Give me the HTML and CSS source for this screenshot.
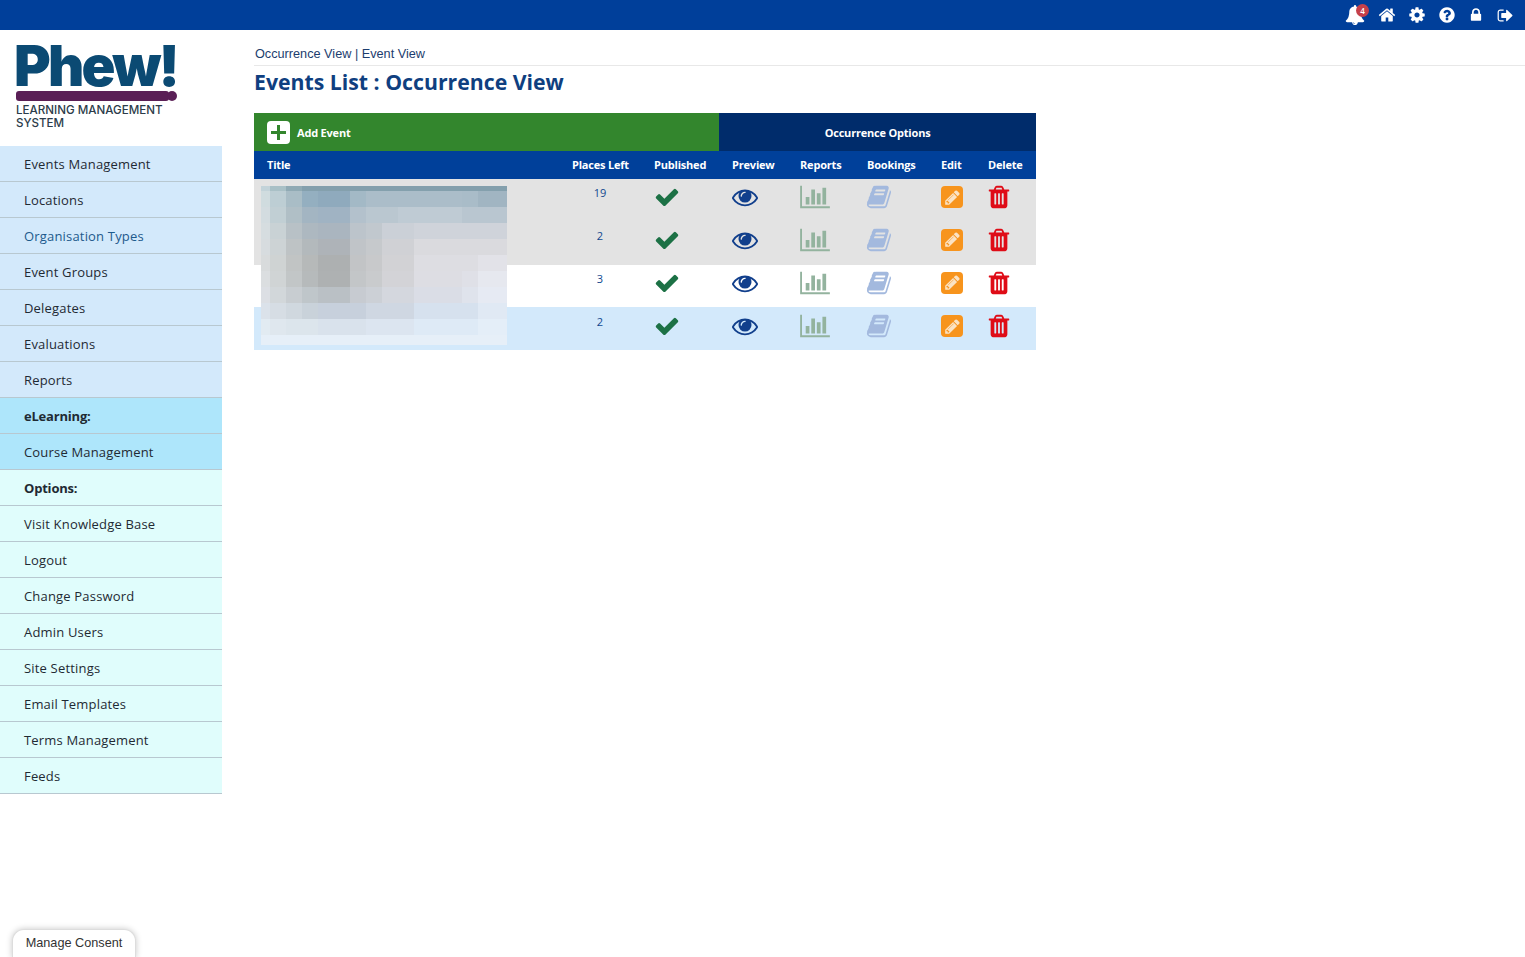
FILE: index.html
```html
<!DOCTYPE html>
<html lang="en">
<head>
<meta charset="utf-8">
<title>Events List : Occurrence View</title>
<link rel="stylesheet" href="styles.css">
</head>
<body>
<svg class="defs" width="0" height="0" aria-hidden="true">
  <symbol id="i-check" viewBox="0 0 1792 1792"><path d="M1671 566q0 40-28 68l-724 724-136 136q-28 28-68 28t-68-28l-136-136-362-362q-28-28-28-68t28-68l136-136q28-28 68-28t68 28l294 295 656-657q28-28 68-28t68 28l136 136q28 28 28 68z"/></symbol>
  <symbol id="i-eye" viewBox="0 0 1792 1792"><path d="M1664 960q-152-236-381-353 61 104 61 225 0 185-131.5 316.5t-316.5 131.5-316.5-131.5-131.5-316.5q0-121 61-225-229 117-381 353 133 205 333.5 326.5t434.5 121.5 434.5-121.5 333.5-326.5zm-720-384q0-20-14-34t-34-14q-125 0-214.5 89.5t-89.5 214.5q0 20 14 34t34 14 34-14 14-34q0-86 61-147t147-61q20 0 34-14t14-34zm848 384q0 34-20 69-140 230-376.5 368.5t-499.5 138.5-499.5-139-376.5-368q-20-35-20-69t20-69q140-229 376.5-368t499.5-139 499.5 139 376.5 368q20 35 20 69z"/></symbol>
  <symbol id="i-chart" viewBox="0 0 2048 1792"><path d="M640 896v512h-256v-512h256zm384-512v1024h-256v-1024h256zm1024 1152v128h-2048v-1536h128v1408h1920zm-640-896v768h-256v-768h256zm384-384v1152h-256v-1152h256z"/></symbol>
  <symbol id="i-book" viewBox="0 0 1792 1792"><path d="M1703 478q40 57 18 129l-275 906q-19 64-76.5 107.5t-122.5 43.5h-923q-77 0-148.5-53.5t-99.5-131.5q-24-67-2-127 0-4 3-27t4-37q1-8-3-21.5t-3-19.5q2-11 8-21t16.5-23.5 16.5-23.5q23-38 45-91.5t30-91.5q3-10 .5-30t-.5-28q3-11 17-28t17-23q21-36 42-92t25-90q1-9-2.5-32t.5-28q4-13 22-30.5t22-22.5q19-26 42.5-84.5t27.5-96.5q1-8-3-25.5t-2-26.5q2-8 9-18t18-23 17-21q8-12 16.5-30.5t15-35 16-36 19.5-32 26.5-23.5 36-11.5 47.5 5.5l-1 3q38-9 51-9h761q74 0 114 56t18 130l-274 906q-36 119-71.5 153.5t-128.5 34.5h-869q-27 0-38 15-11 16-1 43 24 70 144 70h923q29 0 56-15.5t35-41.5l300-987q7-22 5-57 38 15 59 43zm-1064 2q-4 13 2 22.5t20 9.5h608q13 0 25.5-9.5t16.5-22.5l21-64q4-13-2-22.5t-20-9.5h-608q-13 0-25.5 9.5t-16.5 22.5zm-83 256q-4 13 2 22.5t20 9.5h608q13 0 25.5-9.5t16.5-22.5l21-64q4-13-2-22.5t-20-9.5h-608q-13 0-25.5 9.5t-16.5 22.5z"/></symbol>
  <symbol id="i-pencil" viewBox="0 0 1792 1792"><path d="M491 1536l91-91-235-235-91 91v107h128v128h107zm523-928q0-22-22-22-10 0-17 7l-542 542q-7 7-7 17 0 22 22 22 10 0 17-7l542-542q7-7 7-17zm-54-192l416 416-832 832h-416v-416zm683 96q0 53-37 90l-166 166-416-416 166-165q36-38 90-38 53 0 91 38l235 234q37 39 37 91z"/></symbol>
  <symbol id="i-trash" viewBox="0 0 1792 1792"><path d="M704 1376v-704q0-14-9-23t-23-9h-64q-14 0-23 9t-9 23v704q0 14 9 23t23 9h64q14 0 23-9t9-23zm256 0v-704q0-14-9-23t-23-9h-64q-14 0-23 9t-9 23v704q0 14 9 23t23 9h64q14 0 23-9t9-23zm256 0v-704q0-14-9-23t-23-9h-64q-14 0-23 9t-9 23v704q0 14 9 23t23 9h64q14 0 23-9t9-23zm-544-992h448l-48-117q-7-9-17-11h-317q-10 2-17 11zm928 32v64q0 14-9 23t-23 9h-96v948q0 83-47 143.5t-113 60.5h-832q-66 0-113-58.5t-47-141.5v-952h-96q-14 0-23-9t-9-23v-64q0-14 9-23t23-9h309l70-167q15-37 54-63t79-26h320q40 0 79 26t54 63l70 167h309q14 0 23 9t9 23z"/></symbol>
  <symbol id="i-bell" viewBox="0 0 1792 1792"><path d="M912 1696q0-16-16-16-59 0-101.5-42.5t-42.5-101.5q0-16-16-16t-16 16q0 73 51.5 124.5t124.5 51.5q16 0 16-16zm816-288q0 52-38 90t-90 38h-448q0 106-75 181t-181 75-181-75-75-181h-448q-52 0-90-38t-38-90q50-42 91-88t85-119.5 74.5-158.5 50-206 19.5-260q0-152 117-282.5t307-158.5q-8-19-8-39 0-40 28-68t68-28 68 28 28 68q0 20-8 39 190 28 307 158.5t117 282.5q0 139 19.5 260t50 206 74.5 158.5 85 119.5 91 88z"/></symbol>
  <symbol id="i-home" viewBox="0 0 1792 1792"><path d="M1472 992v480q0 26-19 45t-45 19h-384v-384h-256v384h-384q-26 0-45-19t-19-45v-480q0-1 .5-3t.5-3l575-474 575 474q1 2 1 6zm223-69l-62 74q-8 9-21 11h-3q-13 0-21-7l-692-577-692 577q-12 8-24 7-13-2-21-11l-62-74q-8-10-7-23.5t11-21.5l719-599q32-26 76-26t76 26l244 204v-195q0-14 9-23t23-9h192q14 0 23 9t9 23v408l219 182q10 8 11 21.5t-7 23.5z"/></symbol>
  <symbol id="i-cog" viewBox="0 0 1792 1792"><path d="M1152 896q0-106-75-181t-181-75-181 75-75 181 75 181 181 75 181-75 75-181zm512-109v222q0 12-8 23t-20 13l-185 28q-19 54-39 91 35 50 107 138 10 12 10 25t-9 23q-27 37-99 108t-94 71q-12 0-26-9l-138-108q-44 23-91 38-16 136-29 186-7 28-36 28h-222q-14 0-24.5-8.5t-11.5-21.5l-28-184q-49-16-90-37l-141 107q-10 9-25 9-14 0-25-11-126-114-165-168-7-10-7-23 0-12 8-23 15-21 51-66.5t54-70.5q-27-50-41-99l-183-27q-13-2-21-12.5t-8-23.5v-222q0-12 8-23t19-13l186-28q14-46 39-92-40-57-107-138-10-12-10-24 0-10 9-23 26-36 98.5-107.5t94.5-71.5q13 0 26 10l138 107q44-23 91-38 16-136 29-186 7-28 36-28h222q14 0 24.5 8.5t11.5 21.5l28 184q49 16 90 37l142-107q9-9 24-9 13 0 25 10 129 119 165 170 7 8 7 22 0 12-8 23-15 21-51 66.5t-54 70.5q26 50 41 98l183 28q13 2 21 12.5t8 23.5z"/></symbol>
  <symbol id="i-help" viewBox="0 0 1792 1792"><path d="M1024 1376v-192q0-14-9-23t-23-9h-192q-14 0-23 9t-9 23v192q0 14 9 23t23 9h192q14 0 23-9t9-23zm256-672q0-88-55.5-163t-138.5-116-170-41q-243 0-371 213-15 24 8 42l132 100q7 6 19 6 16 0 25-12 53-68 86-92 34-24 86-24 48 0 85.5 26t37.5 59q0 38-20 61t-68 45q-63 28-115.5 86.5t-52.5 125.5v36q0 14 9 23t23 9h192q14 0 23-9t9-23q0-19 21.5-49.5t54.5-49.5q32-18 49-28.5t46-35 44.5-48 28-60.5 12.5-81zm384 192q0 209-103 385.5t-279.5 279.5-385.5 103-385.5-103-279.5-279.5-103-385.5 103-385.5 279.5-279.5 385.5-103 385.5 103 279.5 279.5 103 385.5z"/></symbol>
  <symbol id="i-lock" viewBox="0 0 1792 1792"><path d="M640 768h512v-192q0-106-75-181t-181-75-181 75-75 181v192zm832 96v576q0 40-28 68t-68 28h-960q-40 0-68-28t-28-68v-576q0-40 28-68t68-28h32v-192q0-184 132-316t316-132 316 132 132 316v192h32q40 0 68 28t28 68z"/></symbol>
  <symbol id="i-out" viewBox="0 0 1792 1792"><path d="M704 1440q0 4 1 20t.5 26.5-3 23.5-10 19.5-20.5 6.5h-320q-119 0-203.5-84.5t-84.5-203.5v-704q0-119 84.5-203.5t203.5-84.5h320q13 0 22.5 9.5t9.5 22.5q0 4 1 20t.5 26.5-3 23.5-10 19.5-20.5 6.5h-320q-66 0-113 47t-47 113v704q0 66 47 113t113 47h312l11.5 1 11.5 3 8 5.5 7 9 2 13.5zm928-544q0 26-19 45l-544 544q-19 19-45 19t-45-19-19-45v-288h-448q-26 0-45-19t-19-45v-384q0-26 19-45t45-19h448v-288q0-26 19-45t45-19 45 19l544 544q19 19 19 45z"/></symbol>
</svg>

<header class="topbar">
  <span class="top-icon bell-wrap"><svg class="top-svg bell"><use href="#i-bell"/></svg><span class="badge">4</span></span>
  <svg class="top-svg home"><use href="#i-home"/></svg>
  <svg class="top-svg cog"><use href="#i-cog"/></svg>
  <svg class="top-svg help"><use href="#i-help"/></svg>
  <svg class="top-svg lock"><use href="#i-lock"/></svg>
  <svg class="top-svg out"><use href="#i-out"/></svg>
</header>

<div class="page">
  <aside class="sidebar">
    <div class="logo">
      <div class="logo-word">Phew!</div>
      <div class="logo-bar"><span class="bar-long"></span><span class="bar-dot"></span></div>
      <div class="logo-sub">LEARNING MANAGEMENT SYSTEM</div>
    </div>
    <nav class="menu">
      <a class="item blue">Events Management</a>
      <a class="item blue">Locations</a>
      <a class="item blue current">Organisation Types</a>
      <a class="item blue">Event Groups</a>
      <a class="item blue">Delegates</a>
      <a class="item blue">Evaluations</a>
      <a class="item blue">Reports</a>
      <a class="item sky head">eLearning:</a>
      <a class="item sky">Course Management</a>
      <a class="item mint head">Options:</a>
      <a class="item mint">Visit Knowledge Base</a>
      <a class="item mint">Logout</a>
      <a class="item mint">Change Password</a>
      <a class="item mint">Admin Users</a>
      <a class="item mint">Site Settings</a>
      <a class="item mint">Email Templates</a>
      <a class="item mint">Terms Management</a>
      <a class="item mint">Feeds</a>
    </nav>
  </aside>

  <main class="content">
    <div class="crumbs">Occurrence View | Event View</div>
    <h1 class="title">Events List : Occurrence View</h1>
    <div class="table-wrap">
      <table class="events">
        <colgroup>
          <col class="c-title"><col class="c-places"><col class="c-pub"><col class="c-prev"><col class="c-rep"><col class="c-book"><col class="c-edit"><col class="c-del">
        </colgroup>
        <thead>
          <tr class="band">
            <th colspan="3" class="add"><span class="add-inner"><span class="plus"></span>Add Event</span></th>
            <th colspan="5" class="opts">Occurrence Options</th>
          </tr>
          <tr class="cols">
            <th>Title</th><th>Places Left</th><th>Published</th><th>Preview</th><th>Reports</th><th>Bookings</th><th>Edit</th><th>Delete</th>
          </tr>
        </thead>
        <tbody>
          <tr class="grey">
            <td></td><td class="num">19</td>
            <td><svg class="ic check"><use href="#i-check"/></svg></td>
            <td><svg class="ic eye"><use href="#i-eye"/></svg></td>
            <td><svg class="ic chart"><use href="#i-chart"/></svg></td>
            <td><svg class="ic book"><use href="#i-book"/></svg></td>
            <td><span class="edit"><svg class="pen"><use href="#i-pencil"/></svg></span></td>
            <td><svg class="ic trash"><use href="#i-trash"/></svg></td>
          </tr>
          <tr class="grey">
            <td></td><td class="num">2</td>
            <td><svg class="ic check"><use href="#i-check"/></svg></td>
            <td><svg class="ic eye"><use href="#i-eye"/></svg></td>
            <td><svg class="ic chart"><use href="#i-chart"/></svg></td>
            <td><svg class="ic book"><use href="#i-book"/></svg></td>
            <td><span class="edit"><svg class="pen"><use href="#i-pencil"/></svg></span></td>
            <td><svg class="ic trash"><use href="#i-trash"/></svg></td>
          </tr>
          <tr class="plain">
            <td></td><td class="num">3</td>
            <td><svg class="ic check"><use href="#i-check"/></svg></td>
            <td><svg class="ic eye"><use href="#i-eye"/></svg></td>
            <td><svg class="ic chart"><use href="#i-chart"/></svg></td>
            <td><svg class="ic book"><use href="#i-book"/></svg></td>
            <td><span class="edit"><svg class="pen"><use href="#i-pencil"/></svg></span></td>
            <td><svg class="ic trash"><use href="#i-trash"/></svg></td>
          </tr>
          <tr class="pale">
            <td></td><td class="num">2</td>
            <td><svg class="ic check"><use href="#i-check"/></svg></td>
            <td><svg class="ic eye"><use href="#i-eye"/></svg></td>
            <td><svg class="ic chart"><use href="#i-chart"/></svg></td>
            <td><svg class="ic book"><use href="#i-book"/></svg></td>
            <td><span class="edit"><svg class="pen"><use href="#i-pencil"/></svg></span></td>
            <td><svg class="ic trash"><use href="#i-trash"/></svg></td>
          </tr>
        </tbody>
      </table>
      <svg class="mosaic" width="246" height="159" viewBox="0 0 246 159" shape-rendering="crispEdges" aria-hidden="true">
        <rect width="246" height="159" fill="#dfe4e8"/>
        <g fill="#c3d3d9"><rect x="0" y="0" width="9" height="5"/></g>
        <rect x="9" width="16" height="5" fill="#a9c0c6"/><rect x="25" width="16" height="5" fill="#90aab4"/><rect x="41" width="205" height="5" fill="#84a0ad"/>
        <rect y="5" width="9" height="16" fill="#d0dcdf"/><rect x="9" y="5" width="16" height="16" fill="#bdced4"/><rect x="25" y="5" width="16" height="16" fill="#a9bdc6"/><rect x="41" y="5" width="16" height="16" fill="#94afc0"/><rect x="57" y="5" width="32" height="16" fill="#8faabd"/><rect x="89" y="5" width="16" height="16" fill="#a3b9c6"/><rect x="105" y="5" width="96" height="16" fill="#abbdc9"/><rect x="201" y="5" width="16" height="16" fill="#a9bcc8"/><rect x="217" y="5" width="29" height="16" fill="#a1b5c2"/>
        <rect y="21" width="9" height="16" fill="#d3dce0"/><rect x="9" y="21" width="16" height="16" fill="#c1cfd4"/><rect x="25" y="21" width="16" height="16" fill="#b0bfc6"/><rect x="41" y="21" width="16" height="16" fill="#a3b5c2"/><rect x="57" y="21" width="32" height="16" fill="#a0b3c3"/><rect x="89" y="21" width="16" height="16" fill="#b3c1cc"/><rect x="105" y="21" width="32" height="16" fill="#bac7d0"/><rect x="137" y="21" width="64" height="16" fill="#bfcbd4"/><rect x="201" y="21" width="45" height="16" fill="#b9c6d0"/>
        <rect y="37" width="9" height="16" fill="#d6dde0"/><rect x="9" y="37" width="16" height="16" fill="#c9d2d5"/><rect x="25" y="37" width="16" height="16" fill="#b8c1c6"/><rect x="41" y="37" width="16" height="16" fill="#adb8c0"/><rect x="57" y="37" width="32" height="16" fill="#aab5bf"/><rect x="89" y="37" width="16" height="16" fill="#bcc4cb"/><rect x="105" y="37" width="16" height="16" fill="#c1c8ce"/><rect x="121" y="37" width="32" height="16" fill="#cbd0d7"/><rect x="153" y="37" width="93" height="16" fill="#cfd3da"/>
        <rect y="53" width="9" height="16" fill="#d7dcdf"/><rect x="9" y="53" width="16" height="16" fill="#cdd3d5"/><rect x="25" y="53" width="16" height="16" fill="#bec3c5"/><rect x="41" y="53" width="16" height="16" fill="#b3b9bc"/><rect x="57" y="53" width="32" height="16" fill="#aeb3b8"/><rect x="89" y="53" width="16" height="16" fill="#c0c4c8"/><rect x="105" y="53" width="16" height="16" fill="#c6c9cc"/><rect x="121" y="53" width="32" height="16" fill="#d0d1d5"/><rect x="153" y="53" width="93" height="16" fill="#dadade"/>
        <rect y="69" width="9" height="16" fill="#d8dbdc"/><rect x="9" y="69" width="16" height="16" fill="#cfd3d3"/><rect x="25" y="69" width="16" height="16" fill="#c1c4c4"/><rect x="41" y="69" width="16" height="16" fill="#b6b9b9"/><rect x="57" y="69" width="32" height="16" fill="#adb0b1"/><rect x="89" y="69" width="16" height="16" fill="#c2c4c6"/><rect x="105" y="69" width="16" height="16" fill="#c8c9cb"/><rect x="121" y="69" width="32" height="16" fill="#d2d2d5"/><rect x="153" y="69" width="64" height="16" fill="#dddde2"/><rect x="217" y="69" width="29" height="16" fill="#e2e2e8"/>
        <rect y="85" width="9" height="16" fill="#dbdee0"/><rect x="9" y="85" width="16" height="16" fill="#d0d4d5"/><rect x="25" y="85" width="16" height="16" fill="#c2c6c7"/><rect x="41" y="85" width="16" height="16" fill="#b6babb"/><rect x="57" y="85" width="32" height="16" fill="#aeb1b2"/><rect x="89" y="85" width="16" height="16" fill="#c3c6c8"/><rect x="105" y="85" width="16" height="16" fill="#c9cbcd"/><rect x="121" y="85" width="32" height="16" fill="#d3d3d7"/><rect x="153" y="85" width="48" height="16" fill="#dddde3"/><rect x="201" y="85" width="16" height="16" fill="#dfe0e7"/><rect x="217" y="85" width="29" height="16" fill="#e6e8ef"/>
        <rect y="101" width="9" height="16" fill="#dcdfe4"/><rect x="9" y="101" width="16" height="16" fill="#d2d7da"/><rect x="25" y="101" width="16" height="16" fill="#c8cdd1"/><rect x="41" y="101" width="16" height="16" fill="#bfc6ca"/><rect x="57" y="101" width="32" height="16" fill="#bac0c5"/><rect x="89" y="101" width="16" height="16" fill="#c7cbd1"/><rect x="105" y="101" width="16" height="16" fill="#ccd0d6"/><rect x="121" y="101" width="32" height="16" fill="#d4d7de"/><rect x="153" y="101" width="48" height="16" fill="#dadde6"/><rect x="201" y="101" width="16" height="16" fill="#dfe3ec"/><rect x="217" y="101" width="29" height="16" fill="#e6eaf3"/>
        <rect y="117" width="9" height="16" fill="#dbe2ea"/><rect x="9" y="117" width="16" height="16" fill="#d6dde4"/><rect x="25" y="117" width="16" height="16" fill="#d0d8df"/><rect x="41" y="117" width="16" height="16" fill="#c9d2da"/><rect x="57" y="117" width="48" height="16" fill="#c7d0dc"/><rect x="105" y="117" width="48" height="16" fill="#cfd7e2"/><rect x="153" y="117" width="64" height="16" fill="#d6e1ee"/><rect x="217" y="117" width="29" height="16" fill="#e0e9f4"/>
        <rect y="133" width="9" height="16" fill="#e2ebf2"/><rect x="9" y="133" width="16" height="16" fill="#dfe7ee"/><rect x="25" y="133" width="32" height="16" fill="#dce5ec"/><rect x="57" y="133" width="48" height="16" fill="#d9e2ec"/><rect x="105" y="133" width="48" height="16" fill="#dce5f0"/><rect x="153" y="133" width="64" height="16" fill="#deeaf6"/><rect x="217" y="133" width="29" height="16" fill="#e4eef8"/>
        <rect y="149" width="246" height="10" fill="#e6eff8"/>
      </svg>
    </div>
  </main>
</div>

<button class="consent">Manage Consent</button>
</body>
</html>
```
FILE: styles.css
```css
* { box-sizing: border-box; }
html, body { margin: 0; padding: 0; background: #fff; }
body { font-family: "Open Sans", "Noto Sans", sans-serif; height: 957px; overflow: hidden; position: relative; }
.defs { position: absolute; }

.topbar { height: 30px; background: #003f9a; display: flex; align-items: center; justify-content: flex-end; padding-right: 11px; }
.top-svg { fill: #fff; display: block; }
.top-icon { position: relative; display: block; }
.bell { width: 20px; height: 20px; }
.bell-wrap { margin-right: 13px; }
.badge { position: absolute; top: -1px; right: -4px; width: 13px; height: 13px; border-radius: 50%; background: #c5404a; color: #fff; font-size: 8px; line-height: 13px; text-align: center; font-weight: 600; }
.home { width: 18px; height: 18px; margin-right: 12px; }
.cog { width: 18px; height: 18px; margin-right: 12px; }
.help { width: 18px; height: 18px; margin-right: 12px; }
.lock { width: 16px; height: 16px; margin-right: 13px; }
.out { width: 17px; height: 17px; }

.page { display: flex; align-items: flex-start; }
.sidebar { width: 222px; flex: none; }
.logo { height: 116px; padding: 8px 0 0 16px; }
.logo-word { font-family: Inter, "Open Sans", sans-serif; font-weight: 900; font-size: 56px; line-height: 54px; height: 54px; letter-spacing: -2.8px; color: #0b4a73; margin-left: -2px; padding-top: 1px; }
.logo-bar { display: flex; height: 10px; width: 161px; margin-top: -1px; }
.bar-long { width: 153px; height: 10px; background: #5a1f56; border-radius: 3px; }
.bar-dot { width: 10px; height: 10px; background: #5a1f56; border-radius: 50%; margin-left: -2px; }
.logo-sub { font-family: Inter, "Open Sans", sans-serif; font-weight: 500; font-size: 11.6px; line-height: 13px; color: #2c3c4a; width: 160px; margin-top: 3px; }

.menu { display: flex; flex-direction: column; }
.item { display: block; height: 36px; padding: 9px 0 0 24px; font-size: 13px; line-height: 18px; letter-spacing: .18px; color: #1f2a33; border-bottom: 1px solid #b8c8d0; }
.blue { background: #d3e9fb; }
.sky { background: #aee6fb; }
.mint { background: #e0fdfc; }
.head { font-weight: 700; letter-spacing: -.2px; }
.current { color: #1d5a8c; }

.content { flex: 1; padding: 16px 0 0 32px; min-width: 0; }
.crumbs { font-family: "Liberation Sans", Arial, sans-serif; font-size: 12.7px; line-height: 17px; color: #1c3d6e; height: 20px; padding-left: 1px; border-bottom: 1px solid #e8e8e8; }
.title { margin: 1px 0 16px; font-size: 21.25px; line-height: 30px; font-weight: 700; color: #0f3f80; }
.table-wrap { position: relative; width: 782px; }
.events { width: 782px; border-collapse: collapse; table-layout: fixed; font-size: 11px; letter-spacing: -.2px; }
.c-title { width: 305px; }
.c-places { width: 82px; }
.c-pub { width: 78px; }
.c-prev { width: 68px; }
.c-rep { width: 67px; }
.c-book { width: 74px; }
.c-edit { width: 47px; }
.c-del { width: 61px; }
.events th { padding: 0; font-weight: 700; color: #fff; text-align: left; }
.band th { height: 38px; }
.add { background: #33862d; padding-left: 13px !important; }
.add-inner { display: flex; align-items: center; gap: 7px; line-height: 15px; }
.plus { width: 23px; height: 23px; border-radius: 4px; background-color: #fff; background-image: linear-gradient(#33862d, #33862d), linear-gradient(#33862d, #33862d); background-size: 15px 3px, 3px 15px; background-position: center; background-repeat: no-repeat; }
.events .opts { background: #002c6b; text-align: center; }
.cols th { height: 28px; background: #00409a; padding: 0 0 2px 13px; }
.events td { height: 42.75px; padding: 5px 0 0 13px; vertical-align: top; }
.events .pale td { padding-top: 6px; }
.events td.num { padding: 6px 0 0; text-align: center; font-size: 11px; line-height: 15px; letter-spacing: 0; color: #12488f; }
.events .pale td.num { padding-top: 7px; }
.grey { background: #e3e3e3; }
.plain { background: #fff; }
.pale { background: #d3e9fb; }
.ic { display: block; width: 26px; height: 26px; }
.check { fill: #1c7145; }
.eye { fill: #113f8c; }
.chart { width: 30px; fill: #93b39e; }
.book { fill: #a3b9de; margin-left: -1px; }
.trash { fill: #df0c17; margin-left: -2px; }
.edit { display: flex; align-items: center; justify-content: center; width: 22px; height: 22px; margin-top: 2px; border-radius: 4px; background: #f7941d; }
.pen { width: 17px; height: 17px; fill: #fbe3c4; }
.mosaic { position: absolute; left: 7px; top: 73px; display: block; }

.consent { position: absolute; left: 12px; bottom: -1px; width: 124px; height: 29px; border: 1px solid #ddd; border-bottom: 0; border-radius: 12px 12px 0 0; background: #fff; box-shadow: 0 0 6px rgba(0,0,0,.22); font-family: "Liberation Sans", Arial, sans-serif; font-size: 12.7px; color: #333; padding: 0 0 2px; }
```
